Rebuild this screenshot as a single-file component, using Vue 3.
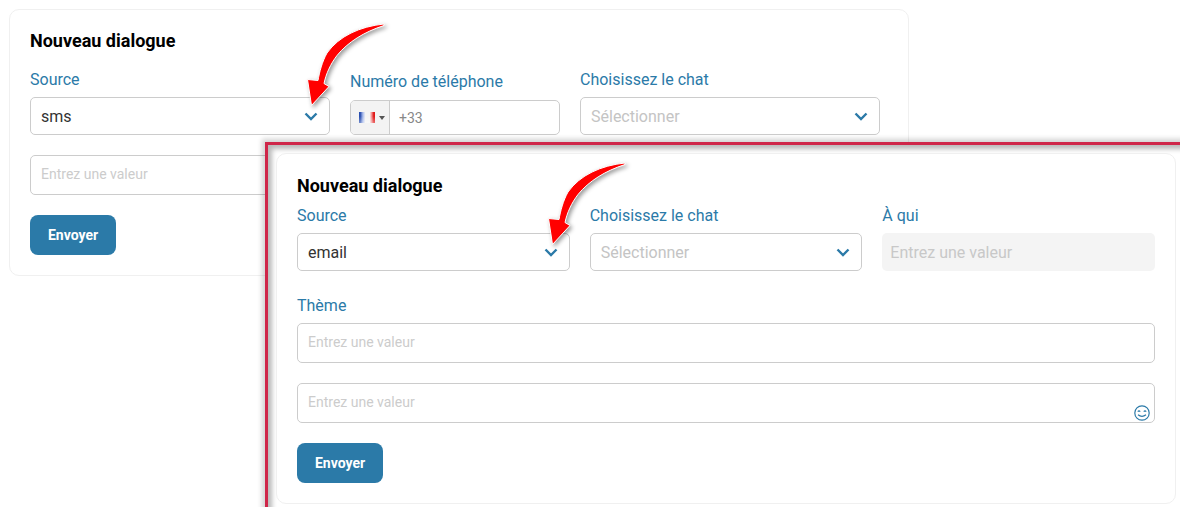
<script setup>
const arrowPath = 'M84 4C60 6.5 39 16 27 33C22 42 19.5 52 18 60.5L7.5 59.5L11.5 85.5L29 66.5L24 63.5C26 54 30.5 44 37 35.5C48 22 64 12 84 5.5Z'
</script>

<template>
  <div class="page">
    <section class="card back-card">
      <h2 class="title">Nouveau dialogue</h2>
      <div class="row back-row">
        <div class="field source-back">
          <label class="label">Source</label>
          <div class="select">
            <span>sms</span>
            <svg class="chevron" width="14" height="9" viewBox="0 0 14 9"><path d="M1.5 1.5L7 7L12.5 1.5" /></svg>
          </div>
        </div>
        <div class="field phone-field">
          <label class="label">Numéro de téléphone</label>
          <div class="phone">
            <div class="flag-box">
              <span class="flag"></span>
              <span class="caret"></span>
            </div>
            <span class="phone-code">+33</span>
          </div>
        </div>
        <div class="field chat-back">
          <label class="label">Choisissez le chat</label>
          <div class="select">
            <span class="muted">Sélectionner</span>
            <svg class="chevron" width="14" height="9" viewBox="0 0 14 9"><path d="M1.5 1.5L7 7L12.5 1.5" /></svg>
          </div>
        </div>
      </div>
      <div class="input message-back">Entrez une valeur</div>
      <button class="send">Envoyer</button>
    </section>

    <svg class="arrow arrow-one" width="90" height="90" viewBox="0 0 90 90">
      <path :d="arrowPath" />
    </svg>

    <div class="overlay">
      <section class="card front-card">
        <h2 class="title">Nouveau dialogue</h2>
        <div class="row front-row">
          <div class="field">
            <label class="label">Source</label>
            <div class="select">
              <span>email</span>
              <svg class="chevron" width="14" height="9" viewBox="0 0 14 9"><path d="M1.5 1.5L7 7L12.5 1.5" /></svg>
            </div>
          </div>
          <div class="field">
            <label class="label">Choisissez le chat</label>
            <div class="select">
              <span class="muted">Sélectionner</span>
              <svg class="chevron" width="14" height="9" viewBox="0 0 14 9"><path d="M1.5 1.5L7 7L12.5 1.5" /></svg>
            </div>
          </div>
          <div class="field">
            <label class="label">À qui</label>
            <div class="disabled">Entrez une valeur</div>
          </div>
        </div>
        <div class="field theme-field">
          <label class="label">Thème</label>
          <div class="input">Entrez une valeur</div>
        </div>
        <div class="input message-front">
          Entrez une valeur
          <svg class="emoji" width="18" height="18" viewBox="0 0 18 18">
            <circle cx="9" cy="9" r="7.2" />
            <path d="M4.8 7.6Q6 6 7.2 7.6M10.8 7.6Q12 6 13.2 7.6M5 10.8Q9 14 13 10.8" />
          </svg>
        </div>
        <button class="send">Envoyer</button>
      </section>
    </div>

    <svg class="arrow arrow-two" width="90" height="90" viewBox="0 0 90 90">
      <path :d="arrowPath" />
    </svg>
  </div>
</template>

<style scoped>
.page {
  position: relative;
  width: 1180px;
  height: 507px;
  overflow: hidden;
  background: #fff;
  padding: 9px 0 0 9px;
  box-sizing: border-box;
  font-family: Roboto, "Liberation Sans", sans-serif;
  color: #333;
}

.card {
  box-sizing: border-box;
  background: #fff;
  border: 1px solid #f0f0f0;
  border-radius: 10px;
}

.back-card {
  width: 900px;
  height: 267px;
  padding: 20px;
}

.title {
  margin: 0;
  font-size: 18px;
  line-height: 22px;
  font-weight: 700;
  color: #000;
}

.row {
  display: flex;
}

.back-row {
  align-items: flex-end;
  gap: 20px;
  margin-top: 18px;
}

.field {
  display: flex;
  flex-direction: column;
}

.label {
  font-size: 16px;
  line-height: 19px;
  margin-bottom: 8px;
  color: #2b7aa8;
}

.source-back,
.chat-back {
  width: 300px;
}

.phone-field {
  width: 210px;
}

.phone-field .label {
  margin-bottom: 9px;
}

.select {
  box-sizing: border-box;
  height: 38px;
  display: flex;
  align-items: center;
  justify-content: space-between;
  padding: 0 11px 0 10px;
  border: 1px solid #ccc;
  border-radius: 5px;
  font-size: 16px;
  background: #fff;
}

.muted {
  color: #c4c4c4;
}

.chevron {
  margin-top: 1px;
  fill: none;
  stroke: #2b7aa8;
  stroke-width: 2.4;
}

.phone {
  box-sizing: border-box;
  height: 35px;
  display: flex;
  align-items: center;
  border: 1px solid #ccc;
  border-radius: 5px;
  overflow: hidden;
}

.flag-box {
  width: 39px;
  height: 100%;
  display: flex;
  align-items: center;
  padding-left: 8px;
  box-sizing: border-box;
  background: #f3f3f3;
  border-right: 1px solid #ccc;
  flex-shrink: 0;
}

.flag {
  width: 16px;
  height: 11px;
  background:
    linear-gradient(180deg, rgba(255, 255, 255, 0) 40%, rgba(255, 255, 255, 0.35) 100%),
    linear-gradient(90deg, #2a4fb0 0, #2a4fb0 8%, #a9bbec 24%, #f4f4f4 40%, #f4f4f4 66%, #f5a9a9 76%, #e01818 92%, #e01818 100%);
}

.caret {
  margin-left: 4px;
  border-left: 3px solid transparent;
  border-right: 3px solid transparent;
  border-top: 4px solid #555;
}

.phone-code {
  margin-left: 9px;
  padding-top: 1px;
  font-size: 14px;
  color: #888;
}

.input {
  box-sizing: border-box;
  position: relative;
  height: 40px;
  display: flex;
  align-items: center;
  padding: 0 10px 2px;
  border: 1px solid #ccc;
  border-radius: 5px;
  font-size: 14px;
  color: #ccc;
  background: #fff;
}

.message-back {
  width: 850px;
  margin-top: 20px;
}

.send {
  display: block;
  width: 86px;
  height: 40px;
  margin-top: 20px;
  padding: 0;
  border: 0;
  border-radius: 8px;
  background: #2b7aa8;
  color: #fff;
  font-family: inherit;
  font-size: 14px;
  font-weight: 700;
}

/* second screenshot pasted over the first one */
.overlay {
  position: absolute;
  left: 265px;
  top: 142px;
  width: 1000px;
  height: 500px;
  box-sizing: border-box;
  padding: 8px 0 0 8px;
  background: #fff;
  border-top: 3px solid #cf2649;
  border-left: 3px solid #cf2649;
  box-shadow: -3px -3px 5px rgba(0, 0, 0, 0.18), inset 4px 4px 5px rgba(0, 0, 0, 0.28);
}

.front-card {
  width: 900px;
  height: 351px;
  padding: 21px 20px 20px 20px;
}

.front-row {
  gap: 20px;
  margin-top: 9px;
}

.front-row .field {
  flex: 1;
}

.disabled {
  box-sizing: border-box;
  height: 38px;
  display: flex;
  align-items: center;
  padding: 0 8px;
  border-radius: 5px;
  background: #f4f4f4;
  font-size: 16px;
  color: #c8c8c8;
}

.theme-field {
  margin-top: 25px;
}

.message-front {
  margin-top: 20px;
}

.emoji {
  position: absolute;
  right: 3px;
  bottom: 0;
  fill: none;
  stroke: #2b7aa8;
  stroke-width: 1.2;
}

.arrow {
  position: absolute;
  overflow: visible;
  filter: drop-shadow(2px 2px 2px rgba(0, 0, 0, 0.4));
}

.arrow path {
  fill: #f00;
  stroke: #fff;
  stroke-width: 1;
  stroke-linejoin: round;
}

.arrow-one {
  left: 300px;
  top: 20px;
}

.arrow-two {
  left: 541px;
  top: 159px;
}
</style>
